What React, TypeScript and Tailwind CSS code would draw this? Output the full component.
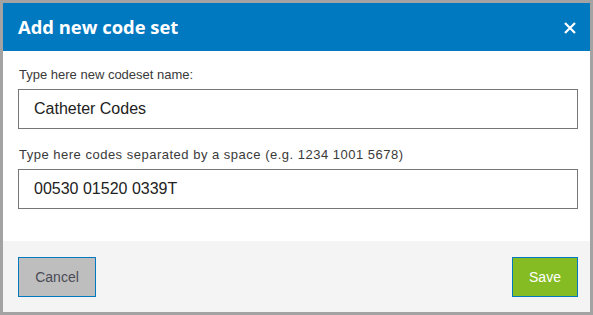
import React from "react";

export default function App() {
  return (
    <div className="w-[593px] h-[315px] border-[3px] border-[#a3a3a3] bg-white flex flex-col" style={{ fontFamily: '"Liberation Sans", Arial, sans-serif' }}>
      <div className="h-[48px] bg-[#0079c1] flex items-center justify-between pl-[15px] pr-[14px] shrink-0">
        <span className="text-white font-bold text-[18.4px] leading-none" style={{ fontFamily: '"Open Sans", sans-serif' }}>
          Add new code set
        </span>
        <svg width="12" height="12" viewBox="0 0 12 12" className="mt-[1px]">
          <path d="M1 1 L11 11 M11 1 L1 11" stroke="white" strokeWidth="2.2" strokeLinecap="butt" />
        </svg>
      </div>
      <div className="flex-1 pl-[15px] pr-[12px] pt-[16px] flex flex-col">
        <label className="pl-[1px] text-[13px] leading-[16px] text-[#3a3a3a]">Type here new codeset name:</label>
        <div className="mt-[6px] h-[40px] border border-[#767676] flex items-center px-[15px] text-[16px] text-[#222]">
          Catheter Codes
        </div>
        <label className="pl-[1px] mt-[18px] text-[13px] leading-[16px] text-[#3a3a3a] tracking-[0.5px]">
          Type here codes separated by a space (e.g. 1234 1001 5678)
        </label>
        <div className="mt-[6px] h-[40px] border border-[#767676] flex items-center px-[15px] text-[16px] text-[#222]">
          00530 01520 0339T
        </div>
      </div>
      <div className="h-[71px] bg-[#f4f4f4] shrink-0 flex justify-between items-start pt-[16px] pl-[15px] pr-[12px]">
        <button className="w-[78px] h-[40px] bg-[#bebebe] border border-[#0079c1] text-[14px] text-[#4a4a55]">Cancel</button>
        <button className="w-[66px] h-[40px] bg-[#86bc23] border border-[#0079c1] text-[14px] text-white">Save</button>
      </div>
    </div>
  );
}
